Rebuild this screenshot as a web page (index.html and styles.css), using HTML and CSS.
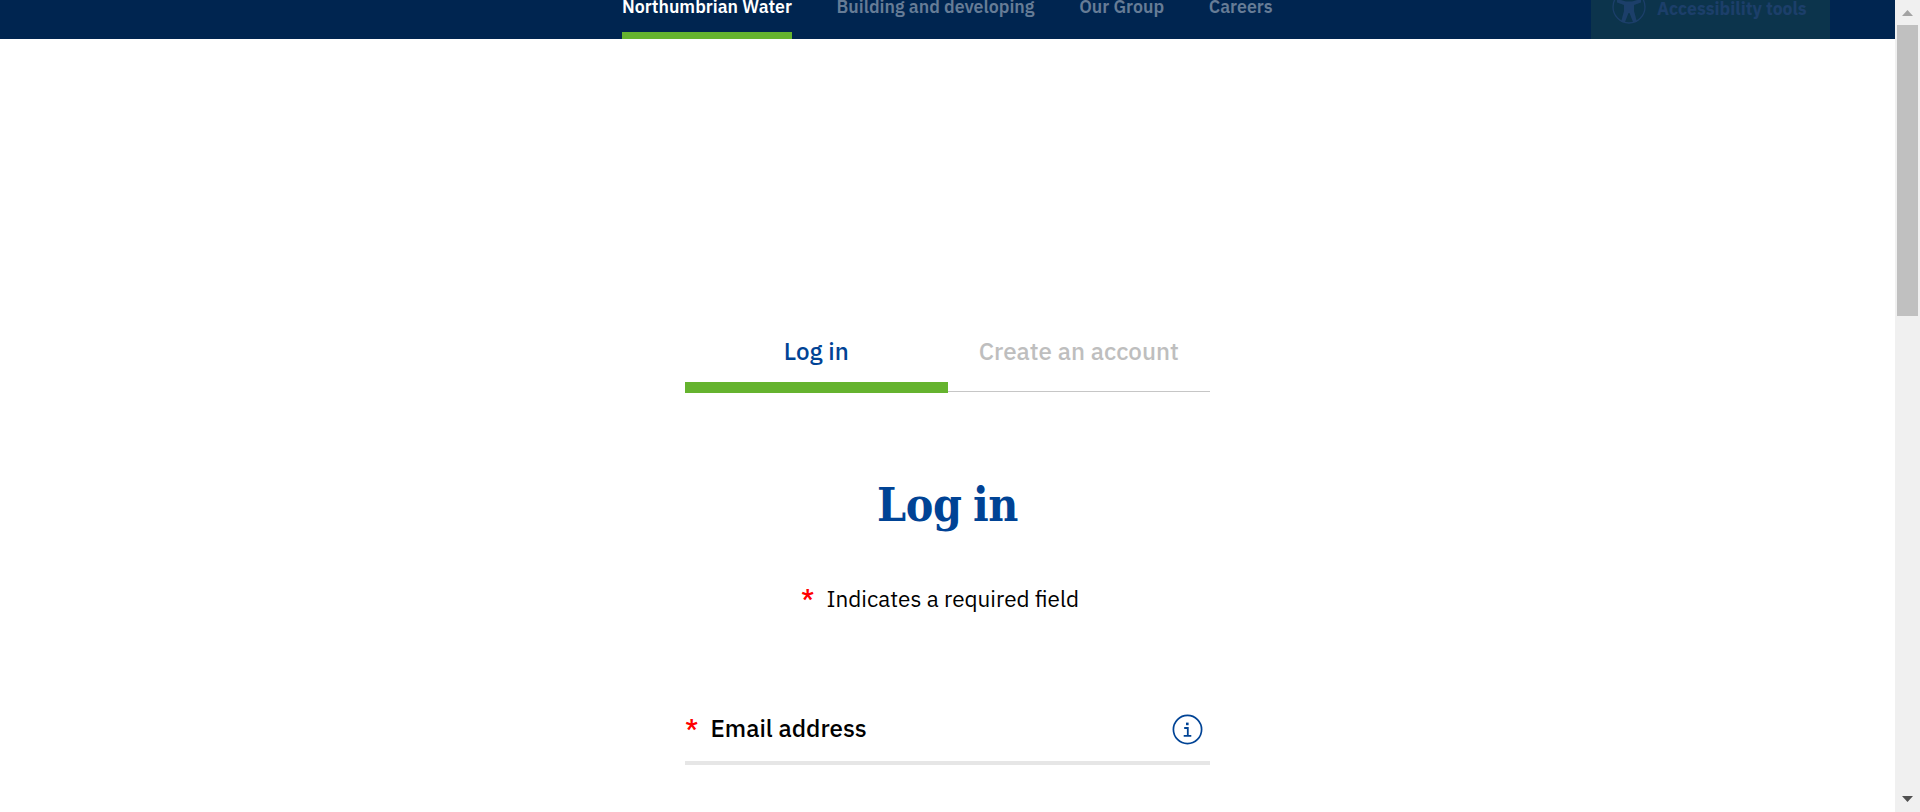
FILE: index.html
```html
<!DOCTYPE html>
<html lang="en">
<head>
<meta charset="utf-8">
<title>Log in</title>
<link rel="stylesheet" href="styles.css">
</head>
<body>
<div class="page">
  <header class="topbar">
    <nav class="nav">
      <a class="nav-item nav-active">Northumbrian Water</a>
      <a class="nav-item nav-building">Building and developing</a>
      <a class="nav-item nav-group">Our Group</a>
      <a class="nav-item nav-careers">Careers</a>
    </nav>
    <a class="tools">
      <svg class="tools-icon" width="34" height="34" viewBox="0 0 34 34"><circle cx="17" cy="17" r="16" fill="none" stroke="currentColor" stroke-width="1.3"/><circle cx="17" cy="6.5" r="3" fill="currentColor"/><path d="M5 9l9 2.500h6l9-2.500v3.500l-7 2.500v6l3 11h-4l-3.500-9h-1l-3.500 9h-4l3-11v-6l-7-2.500z" fill="currentColor"/></svg>
      <span class="tools-label">Accessibility tools</span>
    </a>
  </header>
  <main class="content">
    <div class="tabs">
      <a class="tab tab-active">Log in</a>
      <a class="tab">Create an account</a>
    </div>
    <h1 class="title">Log in</h1>
    <p class="required"><span class="star">*</span><span class="required-text">Indicates a required field</span></p>
    <div class="field">
      <span class="star">*</span><label class="field-label">Email address</label>
      <svg class="info" width="31" height="31" viewBox="0 0 31 31" fill="none" stroke="#004395"><circle cx="15.5" cy="15.5" r="14.1" stroke-width="1.7"/><path d="M12.2 14h3.6v7.800M11.7 21.9h7.6" stroke-width="1.8"/><path d="M15.3 8.600v2.600" stroke-width="2.6"/></svg>
    </div>
  </main>
</div>
<aside class="scrollbar">
  <svg width="25" height="25" viewBox="0 0 25 25"><path d="M7 16l5.5-6 5.5 6z" fill="#a3a3a3"/></svg>
  <div class="thumb"></div>
  <svg class="down" width="25" height="25" viewBox="0 0 25 25"><path d="M7 9h11l-5.5 6z" fill="#505050"/></svg>
</aside>
</body>
</html>
```
FILE: styles.css
```css
* { box-sizing: border-box; }
body {
  margin: 0;
  height: 812px;
  display: flex;
  overflow: hidden;
  background: #fff;
  font-family: "IBM Plex Sans", "Noto Sans", sans-serif;
  white-space: nowrap;
}
.page { width: 1895px; }
.topbar {
  height: 39px;
  display: flex;
  background: #002550;
  overflow: hidden;
}
.nav { display: flex; gap: 44.6px; margin-left: 622px; width: 969px; }
.nav-item {
  height: 39px;
  font-size: 17.78px;
  line-height: 13px;
  font-weight: 600;
  color: #667c96;
}
.nav-active { width: 170px; color: #fff; border-bottom: 7px solid #65b32e; }
.nav-building { width: 198px; }
.nav-group { width: 85px; }
.nav-careers { width: 64px; }
.tools {
  width: 239px;
  height: 39px;
  display: flex;
  background: #0c344c;
  color: #1c3f6a;
}
.tools-icon { margin: -10px 0 0 21px; flex: none; }
.tools-label { margin-left: 11px; font-size: 17.6px; line-height: 17px; font-weight: 700; }
.content { width: 525px; margin: 293px 0 0 685px; }
.tabs { display: flex; height: 61px; }
.tab {
  flex: 1;
  height: 60px;
  border-bottom: 1px solid #c6c6c6;
  text-align: center;
  font-size: 24.2px;
  line-height: 38px;
  font-weight: 500;
  color: #bebebe;
}
.tab-active { height: 61px; border-bottom: 11px solid #65b32e; color: #004395; }
.title {
  margin: 80px 0 0;
  height: 64px;
  text-align: center;
  font: 700 46px/64px "Roboto Slab", "DejaVu Serif Condensed", "DejaVu Serif", serif;
  letter-spacing: -0.4px;
  word-spacing: -2.5px;
  color: #004395;
}
.star { width: 25.5px; color: #f00; font-size: 26px; font-weight: 500; }
.required { display: flex; margin: 46px 0 0; padding-left: 116px; font-size: 22.5px; line-height: 32px; height: 32px; color: #000; }
.required .star { line-height: 30px; }
.field {
  display: flex;
  height: 70px;
  margin-top: 80px;
  line-height: 66px;
  border-bottom: 4px solid #e6e6e6;
}
.field-label { font-size: 24.2px; font-weight: 500; color: #000; }
.info { margin: 19px 7px 0 auto; }
.scrollbar {
  width: 25px;
  height: 812px;
  display: flex;
  flex-direction: column;
  background: #f0f0f0;
}
.thumb { width: 21px; height: 291px; margin-left: 2px; background: #c0c0c0; }
.down { margin-top: auto; }
```
